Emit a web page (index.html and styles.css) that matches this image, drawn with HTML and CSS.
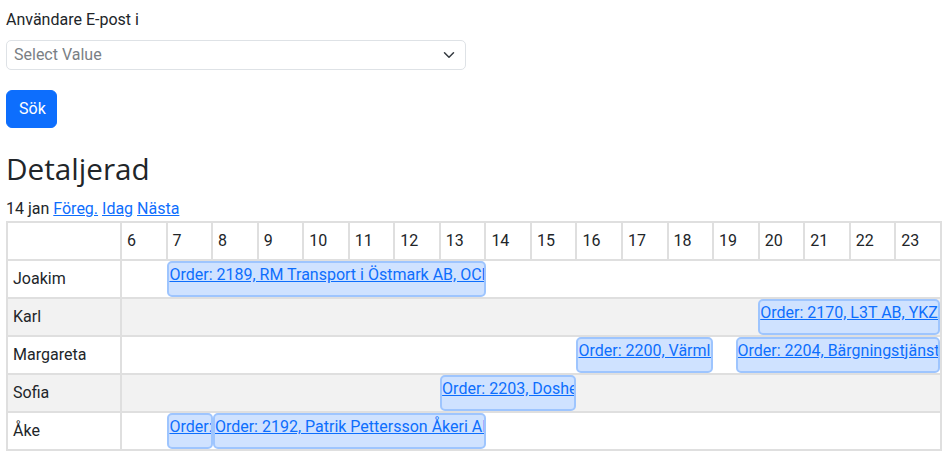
FILE: index.html
```html
<!DOCTYPE html>
<html lang="sv">
<head>
<meta charset="utf-8">
<title>Detaljerad</title>
<link rel="stylesheet" href="styles.css">
</head>
<body>
<div class="page">
  <label class="form-label">Användare E-post i</label>
  <div class="select">
    <span class="placeholder">Select Value</span>
    <svg class="chevron" width="16" height="12" viewBox="0 0 16 16"><path d="m2 5 6 6 6-6" fill="none" stroke="#343a40" stroke-width="2" stroke-linecap="round" stroke-linejoin="round"/></svg>
  </div>
  <button class="btn">Sök</button>
  <h2 class="title">Detaljerad</h2>
  <div class="nav">14 jan <a href="#">Föreg.</a> <a href="#">Idag</a> <a href="#">Nästa</a></div>
  <table class="sched">
    <colgroup><col class="c-name"><col span="18"></colgroup>
    <thead>
      <tr><th></th><th>6</th><th>7</th><th>8</th><th>9</th><th>10</th><th>11</th><th>12</th><th>13</th><th>14</th><th>15</th><th>16</th><th>17</th><th>18</th><th>19</th><th>20</th><th>21</th><th>22</th><th>23</th></tr>
    </thead>
    <tbody>
      <tr><td class="name">Joakim</td><td class="line" colspan="18">
        <div class="ev" style="left:5.5556%;width:38.8889%"><a href="#">Order: 2189, RM Transport i Östmark AB, OCH</a></div>
      </td></tr>
      <tr class="alt"><td class="name">Karl</td><td class="line" colspan="18">
        <div class="ev" style="left:77.7778%;width:22.2222%"><a href="#">Order: 2170, L3T AB, YKZ123</a></div>
      </td></tr>
      <tr><td class="name">Margareta</td><td class="line" colspan="18">
        <div class="ev" style="left:55.5556%;width:16.6667%"><a href="#">Order: 2200, Värmland</a></div>
        <div class="ev" style="left:75%;width:25%"><a href="#">Order: 2204, Bärgningstjänst</a></div>
      </td></tr>
      <tr class="alt"><td class="name">Sofia</td><td class="line" colspan="18">
        <div class="ev" style="left:38.8889%;width:16.6667%"><a href="#">Order: 2203, Dosher</a></div>
      </td></tr>
      <tr><td class="name">Åke</td><td class="line" colspan="18">
        <div class="ev" style="left:5.5556%;width:5.5556%"><a href="#">Order: 2191</a></div>
        <div class="ev" style="left:11.1111%;width:33.3333%"><a href="#">Order: 2192, Patrik Pettersson Åkeri AB</a></div>
      </td></tr>
    </tbody>
  </table>
</div>
</body>
</html>
```
FILE: styles.css
```css
* { box-sizing: border-box; }
html, body { margin: 0; padding: 0; background: #fff; }
body {
  font-family: Roboto, "Liberation Sans", sans-serif;
  font-size: 16px;
  line-height: 1.5;
  color: #212529;
}
.page {
  padding: 8px 5px 0 6px;
  display: flex;
  flex-direction: column;
  align-items: flex-start;
}
.form-label {
  display: block;
  margin-bottom: 8px;
}
.select {
  width: 460px;
  height: 30px;
  border: 1px solid #dee2e6;
  border-radius: 5px;
  padding: 0 8px 0 7px;
  display: flex;
  align-items: center;
  justify-content: space-between;
  margin-bottom: 20px;
}
.placeholder { color: #7a7f85; }
.chevron { display: block; }
.btn {
  font-family: inherit;
  font-size: 16px;
  line-height: 24px;
  color: #fff;
  background: #0d6efd;
  border: 1px solid #0d6efd;
  border-radius: 6px;
  padding: 6px 12px;
  width: 51px;
  height: 38px;
  margin-bottom: 23px;
}
.title {
  margin: 0 0 10px 0;
  font-family: "Open Sans", Roboto, sans-serif;
  font-size: 29.7px;
  font-weight: 500;
  line-height: 1.2;
}
.nav a { color: #0d6efd; text-decoration: underline; }
.sched {
  width: 936px;
  border-collapse: collapse;
  table-layout: fixed;
  border: 2px solid #dfdfdf;
}
.c-name { width: 114px; }
.sched th, .sched td {
  border: 2px solid #dfdfdf;
  padding: 6px 5px;
  height: 38px;
  text-align: left;
  font-weight: 400;
  vertical-align: middle;
}
.sched tr.alt td { background: #f2f2f2; }
.sched td.line {
  position: relative;
  padding: 0;
}
.ev {
  position: absolute;
  top: 0;
  bottom: 0;
  background: #cfe2ff;
  border: 2px solid #9ec5fe;
  border-radius: 5px;
  overflow: hidden;
  white-space: nowrap;
  line-height: 24px;
}
.ev a { color: #0d6efd; text-decoration: underline; }
```
